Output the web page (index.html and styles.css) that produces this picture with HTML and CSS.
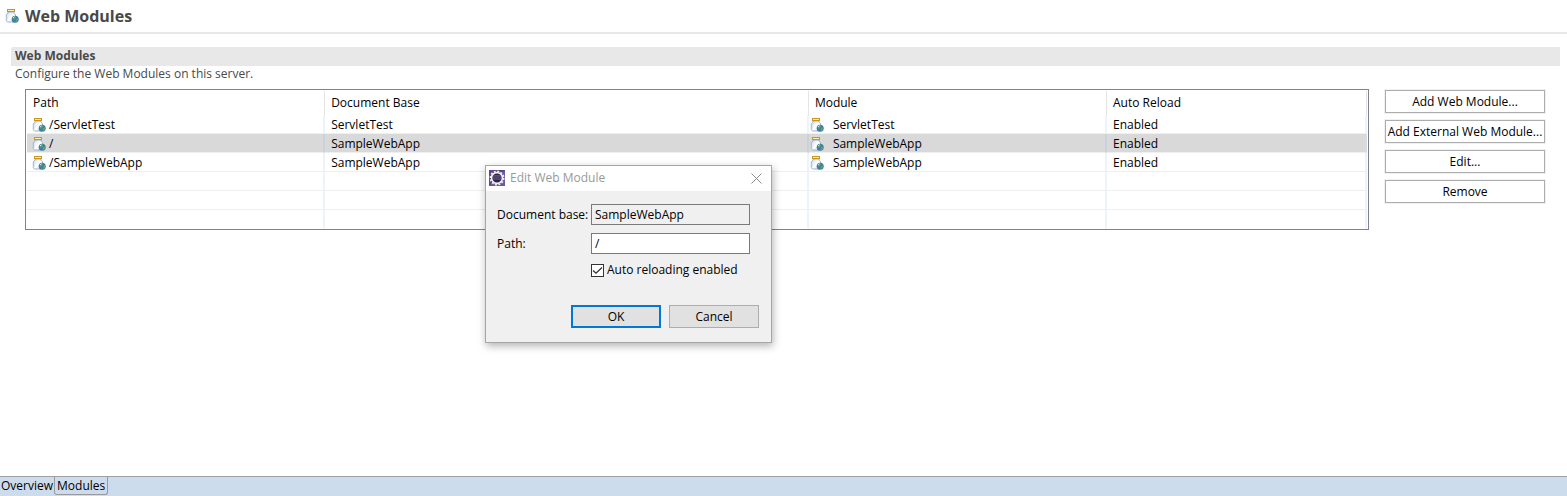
FILE: index.html
```html
<!DOCTYPE html>
<html lang="en">
<head>
<meta charset="utf-8">
<title>Web Modules</title>
<link rel="stylesheet" href="styles.css">
</head>
<body>
<svg class="defs" aria-hidden="true">
  <linearGradient id="glass" x1="0" x2="1" y1="0" y2="1">
    <stop offset="0" stop-color="#c3d9ee"/>
    <stop offset=".5" stop-color="#ffffff"/>
    <stop offset="1" stop-color="#cfe0f4"/>
  </linearGradient>
  <symbol id="jar" viewBox="0 0 16 16">
    <path d="M4 4h6v1.200l1.500 1.500v6.300l-1 1H3.500L2.300 12.800V6.700l1.700-1.500z" fill="url(#glass)" stroke="#9aabc0" stroke-width=".9"/>
    <path d="M3.500 6.800v5.400" stroke="#dce9f7" stroke-width="1.200"/>
    <rect x="3" y="1" width="8" height="3" fill="#c7961e"/>
    <rect x="4" y="2" width="6" height="1" fill="#fbeeb5"/>
    <g transform="translate(.7 0)">
      <circle cx="10.500" cy="11.300" r="3.500" fill="#3f7ba8"/>
      <path d="M8 10.500c.3-1.500 1.500-2.300 2.800-2.200l.5 1.400-1.200 1.200-1 1.300zM11.200 11.200l2-.9.400 1.500-1.300 2-1.500.1z" fill="#5ca466"/>
      <path d="M8.300 9.900l1.600-1.200" stroke="#c9e6ee" stroke-width="1"/>
    </g>
  </symbol>
</svg>
<div class="editor">
  <header class="editor-head">
    <svg class="icon"><use href="#jar"/></svg>
    <h1>Web Modules</h1>
  </header>
  <main class="section">
    <h2>Web Modules</h2>
    <p>Configure the Web Modules on this server.</p>
    <div class="section-body">
      <div class="table-box">
        <table>
          <colgroup><col class="c-path"><col class="c-base"><col class="c-module"><col></colgroup>
          <thead>
            <tr><th>Path</th><th>Document Base</th><th>Module</th><th>Auto Reload</th></tr>
          </thead>
          <tbody>
            <tr>
              <td class="with-icon"><div class="cell"><svg class="icon"><use href="#jar"/></svg>/ServletTest</div></td>
              <td>ServletTest</td>
              <td class="with-icon"><div class="cell module"><svg class="icon"><use href="#jar"/></svg>ServletTest</div></td>
              <td>Enabled</td>
            </tr>
            <tr class="selected">
              <td class="with-icon"><div class="cell"><svg class="icon"><use href="#jar"/></svg>/</div></td>
              <td>SampleWebApp</td>
              <td class="with-icon"><div class="cell module"><svg class="icon"><use href="#jar"/></svg>SampleWebApp</div></td>
              <td>Enabled</td>
            </tr>
            <tr>
              <td class="with-icon"><div class="cell"><svg class="icon"><use href="#jar"/></svg>/SampleWebApp</div></td>
              <td>SampleWebApp</td>
              <td class="with-icon"><div class="cell module"><svg class="icon"><use href="#jar"/></svg>SampleWebApp</div></td>
              <td>Enabled</td>
            </tr>
            <tr><td></td><td></td><td></td><td></td></tr>
            <tr><td></td><td></td><td></td><td></td></tr>
            <tr><td></td><td></td><td></td><td></td></tr>
          </tbody>
        </table>
      </div>
      <div class="actions">
        <button type="button">Add Web Module...</button>
        <button type="button">Add External Web Module...</button>
        <button type="button">Edit...</button>
        <button type="button">Remove</button>
      </div>
    </div>
  </main>
  <nav class="tabs">
    <a href="#overview">Overview</a>
    <a class="active" href="#modules" aria-current="page">Modules</a>
  </nav>
</div>
<form class="dialog" role="dialog" aria-labelledby="dialog-title">
  <div class="dialog-title">
    <svg class="icon" viewBox="0 0 16 16" aria-hidden="true">
      <rect width="16" height="16" fill="#5b4488"/>
      <path d="M0 16L16 0v16z" fill="#6d569e"/>
      <circle cx="8" cy="8" r="6.700" fill="none" stroke="#eeeeee" stroke-width="1.600" stroke-dasharray="2 1.508"/>
      <circle cx="8" cy="8" r="5.400" fill="#2c2346" stroke="#f0f0ee" stroke-width="1.600"/>
      <path d="M4 7h8M4 9h8" stroke="#706699" stroke-width="1"/>
      <path d="M5 5.500h6" stroke="#5a4d84" stroke-width="1"/>
    </svg>
    <span id="dialog-title">Edit Web Module</span>
    <button type="button" class="close" aria-label="Close">
      <svg viewBox="0 0 11 11"><path d="M.5.5l10 10M10.500.5l-10 10" stroke="#8a8a8a" fill="none"/></svg>
    </button>
  </div>
  <div class="fields">
    <label for="base">Document base:</label>
    <input id="base" class="text" type="text" value="SampleWebApp" readonly>
    <label for="path">Path:</label>
    <input id="path" class="text" type="text" value="/">
    <label class="check"><input type="checkbox" checked>Auto reloading enabled</label>
  </div>
  <div class="dialog-actions">
    <button type="submit" class="primary">OK</button>
    <button type="button">Cancel</button>
  </div>
</form>
</body>
</html>
```
FILE: styles.css
```css
* { box-sizing: border-box; }

body {
  margin: 0;
  background: #fff;
  color: #000;
  font: 12px/18px "Open Sans", "Noto Sans", sans-serif;
}

button, input { font: inherit; color: inherit; margin: 0; }

.defs { position: absolute; width: 0; height: 0; }
.icon { display: block; flex: none; width: 16px; height: 16px; }

.editor { display: flex; flex-direction: column; min-height: 100vh; }

.editor-head {
  display: flex;
  align-items: center;
  gap: 5px;
  height: 34px;
  padding-left: 4px;
  border-bottom: 2px solid #e8e8e8;
}
h1 { margin: 0; font-size: 16px; line-height: 20px; color: #494949; }

.section { flex: 1; padding: 13px 7px 0 11px; }
h2 {
  margin: 0;
  padding: 0 0 1px 4px;
  border-radius: 2px 0 0 0;
  background: #e8e8e8;
  color: #494949;
  font-size: 12px;
  line-height: 18px;
}
.section p { margin: 0; padding-left: 4px; line-height: 16px; color: #494949; }

.section-body {
  display: flex;
  align-items: flex-start;
  gap: 16px;
  padding: 7px 15px 0 14px;
}

.table-box {
  flex: 1;
  padding: 1px 1px 0;
  border: 1px solid #82828e;
}
table { width: 100%; table-layout: fixed; border-collapse: separate; border-spacing: 0; }
.c-path, .c-module { width: 22.25%; }
.c-base { width: 36.1%; }
th, td { padding: 0 6px; text-align: left; font-weight: normal; white-space: nowrap; }
th { height: 24px; border-right: 1px solid #e4e4e4; }
td {
  height: 19px;
  padding-top: 1px;
  line-height: 17px;
  border-right: 2px solid #edf3fd;
  border-bottom: 1px solid #efefef;
}
tr:last-child td { border-bottom-color: #fff; }
.selected td { background: #d9d9d9; border-right-color: #c9d1da; }
.selected td:last-child { border-right-color: #d4dce4; }
td.with-icon { padding: 1px 0 0 4px; }
td ~ td.with-icon { padding-left: 0; }
.cell { display: flex; align-items: center; gap: 2px; }
.module { gap: 8px; }

.actions { display: flex; flex-direction: column; gap: 7px; width: 160px; padding-top: 1px; }
.actions button {
  height: 23px;
  padding: 0;
  border: 1px solid #adadad;
  background: #fff;
  box-shadow: 0 0 0 1px #f1f1f1;
  white-space: nowrap;
}

.tabs {
  display: flex;
  height: 20px;
  border-top: 1px solid #a0a0a0;
  background: #cddcec;
}
.tabs a { height: 19px; padding: 0 1px; color: #000; text-decoration: none; }
.tabs .active {
  margin-top: -1px;
  padding: 1px 2px 0;
  border: 1px solid #9a9a9a;
  border-top: 0;
  border-radius: 0 0 3px 3px;
}

/* Modal window floating over the editor */
.dialog {
  position: absolute;
  left: 485px;
  top: 165px;
  width: 287px;
  border: 1px solid #a6a6a6;
  background: #f0f0f0;
  box-shadow: 1px 3px 8px rgba(0, 0, 0, .3);
}
.dialog-title {
  display: flex;
  align-items: center;
  gap: 5px;
  height: 25px;
  padding: 0 9px 1px 3px;
  background: #fff;
  color: #999;
}
.close { margin-left: auto; padding: 0; border: 0; background: none; }
.close svg { display: block; width: 11px; height: 11px; }

.fields {
  display: grid;
  grid-template-columns: 89px 1fr;
  align-items: center;
  gap: 8px 5px;
  padding: 13px 21px 0 11px;
  white-space: nowrap;
}
.text { width: 100%; height: 21px; padding: 0 3px; border: 1px solid #7a7a7a; background: #fff; }
.text:read-only { background: #f0f0f0; }
.check { grid-column: 2; display: flex; align-items: center; gap: 3px; line-height: 16px; }
.check input {
  appearance: none;
  width: 13px;
  height: 13px;
  border: 1px solid #333;
  background: #fff;
}
.check input:checked {
  background: #fff url("data:image/svg+xml,%3Csvg xmlns='http://www.w3.org/2000/svg' viewBox='0 0 11 11'%3E%3Cpath d='M1 5.500l3 2.700 6-5.700' fill='none' stroke='%23333' stroke-width='1.300'/%3E%3C/svg%3E") center / 11px 11px;
}
.dialog-actions { display: flex; justify-content: flex-end; gap: 8px; padding: 27px 12px 14px 0; }
.dialog-actions button {
  width: 90px;
  height: 23px;
  padding: 0;
  border: 1px solid #adadad;
  background: #e1e1e1;
}
.dialog-actions .primary { border: 2px solid #0078d7; }
```
